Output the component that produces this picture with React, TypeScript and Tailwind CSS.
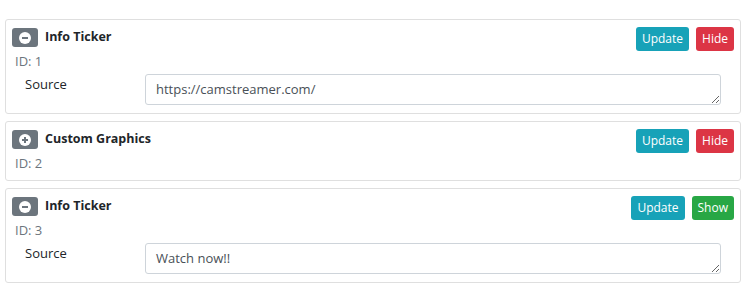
import { useState } from 'react'

type Item = {
  id: number
  title: string
  open: boolean
  visible: boolean
  source?: string
}

const items: Item[] = [
  { id: 1, title: 'Info Ticker', open: true, visible: true, source: 'https://camstreamer.com/' },
  { id: 2, title: 'Custom Graphics', open: false, visible: true },
  { id: 3, title: 'Info Ticker', open: true, visible: false, source: 'Watch now!!' },
]

function ToggleIcon({ open }: { open: boolean }) {
  return (
    <svg width="12" height="12" viewBox="0 0 12 12">
      <circle cx="6" cy="6" r="6" fill="#fff" />
      <rect x="3" y="5" width="6" height="2" fill="#6c757d" />
      {!open && <rect x="5" y="3" width="2" height="6" fill="#6c757d" />}
    </svg>
  )
}

function Card({ item }: { item: Item }) {
  const [source, setSource] = useState(item.source ?? '')
  return (
    <div className="bg-white border border-[#dfdfdf] rounded-[3px] pl-[6px] pr-[6px] pt-[7px] pb-[8px]">
      <div className="flex items-start">
        <button className="w-[26px] h-[19px] mt-[1px] bg-[#6c757d] rounded-[3px] flex items-center justify-center">
          <ToggleIcon open={item.open} />
        </button>
        <div className="ml-[7px] text-[12.5px] font-bold text-[#212529] leading-[20px]">{item.title}</div>
        <div className="ml-auto flex gap-[7px]">
          <button className="h-[24px] px-[6px] rounded-[3px] bg-[#17a2b8] text-white text-[12px] leading-[24px]">Update</button>
          {item.visible ? (
            <button className="h-[24px] px-[6px] rounded-[3px] bg-[#dc3545] text-white text-[12px] leading-[24px]">Hide</button>
          ) : (
            <button className="h-[24px] px-[6px] rounded-[3px] bg-[#28a745] text-white text-[12px] leading-[24px]">Show</button>
          )}
        </div>
      </div>
      <div className="pl-[3px] text-[13px] text-[#6c757d] leading-[18px] mt-[1px]">ID: {item.id}</div>
      {item.open && (
        <div className="flex items-start mt-[4px] pr-[13px]">
          <div className="w-[133px] pl-[13px] text-[13px] text-[#212529] leading-[18px] pt-[1px]">Source</div>
          <textarea
            value={source}
            onChange={e => setSource(e.target.value)}
            rows={1}
            className="flex-1 h-[31px] border border-[#ced4da] rounded-[3px] px-[10px] py-[5px] text-[13px] text-[#495057] leading-[19px] resize-y"
          />
        </div>
      )}
    </div>
  )
}

export default function App() {
  return (
    <div className="w-[751px] h-[304px] bg-white pl-[5px] pr-[10px] pt-[19px] flex flex-col gap-[7px]" style={{ fontFamily: '"Open Sans", "Noto Sans", sans-serif' }}>
      {items.map(item => (
        <Card key={item.id} item={item} />
      ))}
    </div>
  )
}
